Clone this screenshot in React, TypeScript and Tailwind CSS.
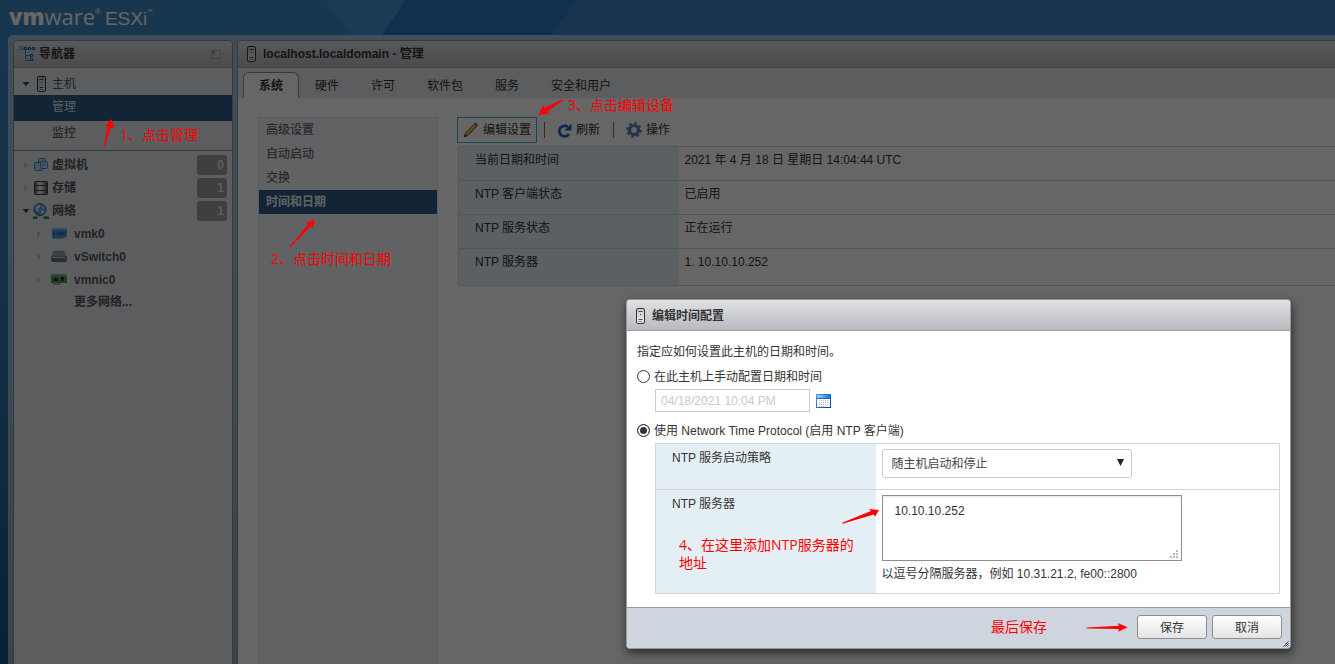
import { useState } from "react";
import type { ReactNode } from "react";

function HostIcon() {
  return (
    <svg className="h-4 w-[11px] shrink-0" viewBox="0 0 11 16" fill="none" aria-hidden="true">
      <defs>
        <linearGradient id="hostFill" x1="0" y1="0" x2="0" y2="1">
          <stop offset="0" stopColor="#c4c6c9" />
          <stop offset="1" stopColor="#eeeff1" />
        </linearGradient>
      </defs>
      <rect x="1.5" y="0.5" width="8" height="15" rx="1.5" fill="url(#hostFill)" stroke="#333333" />
      <path d="M3.500 3.500h4M3.500 11.500h4" stroke="#4a4a4a" />
      <path d="M3.500 13.500h4" stroke="#8a8a8a" />
      <rect x="5" y="6" width="1" height="1" fill="#333333" />
    </svg>
  );
}

function TreeIcon() {
  return (
    <svg className="h-4 w-4 shrink-0" viewBox="0 0 16 16" fill="none" aria-hidden="true">
      <path d="M3 2.500h12M6.500 3v11.500H11M6.500 9.500H11" stroke="#5d7f9c" />
      <rect x="0.5" y="0.5" width="3" height="3" fill="#b9e6fa" stroke="#4aa9d6" />
      <rect x="5.5" y="1.5" width="2" height="2" fill="#a5d4f5" stroke="#1d6fb5" />
      <rect x="9.5" y="1.5" width="2" height="2" fill="#a5d4f5" stroke="#1d6fb5" />
      <rect x="13.5" y="1.5" width="2" height="2" fill="#a5d4f5" stroke="#1d6fb5" />
      <rect x="11.5" y="8.5" width="2" height="2" fill="#a5d4f5" stroke="#1d6fb5" />
      <rect x="11.5" y="12.5" width="2" height="2" fill="#a5d4f5" stroke="#1d6fb5" />
    </svg>
  );
}

function VmIcon() {
  return (
    <svg className="h-[14px] w-4 shrink-0" viewBox="0 0 16 14" aria-hidden="true">
      <g fill="#b9d2ec" stroke="#3f8ad4" strokeWidth="1">
        <rect x="5.5" y="0.5" width="7" height="7" rx="1" />
        <rect x="1.5" y="4.500" width="8" height="8" rx="1" />
        <rect x="7.5" y="3.500" width="7" height="7" rx="1" fillOpacity="0.6" />
      </g>
    </svg>
  );
}

function StorageIcon() {
  return (
    <svg className="h-[14px] w-4 shrink-0" viewBox="0 0 16 14" aria-hidden="true">
      <defs>
        <linearGradient id="diskFill" x1="0" y1="0" x2="1" y2="0">
          <stop offset="0" stopColor="#6b6b6b" />
          <stop offset="0.4" stopColor="#ffffff" />
          <stop offset="1" stopColor="#5a5a5a" />
        </linearGradient>
      </defs>
      <rect x="1" y="0" width="14" height="14" rx="2" fill="#3c3c3c" />
      <path d="M2 1h12v3H2zM2 5h12v4H2zM2 10h12v3H2z" fill="url(#diskFill)" />
    </svg>
  );
}

function GlobeIcon() {
  return (
    <svg className="h-4 w-4 shrink-0" viewBox="0 0 16 16" aria-hidden="true">
      <path d="M0 13.500h16v2.500H0z" fill="#1f9a1f" />
      <path d="M5.500 12h4l1.500 4H4z" fill="#e8e8e8" />
      <circle cx="7" cy="6.5" r="6" fill="#5f98e2" stroke="#2b5fb0" />
      <path d="M3 3.500l3-2 2 1-1 2-2 1 1 2-1 1.500L2.500 7zM9 3l2 .5 1 2-2 .5zM8 7.500l3 0 0 2-2.500 2z" fill="#d5e6fb" />
    </svg>
  );
}

function VmkIcon() {
  return (
    <svg className="h-[11px] w-4 shrink-0" viewBox="0 0 16 11" aria-hidden="true">
      <path d="M1 0h15v9h-2v1H1z" fill="#4a97d8" />
      <path d="M1 0h15v2H1z" fill="#7dbdf0" />
      <path d="M3 4v3M5 5.500h3M9 4v3M11 4v3M13 4v3" stroke="#1b4f80" />
      <path d="M2 10h10v1H2z" fill="#b8b070" />
    </svg>
  );
}

function SwitchIcon() {
  return (
    <svg className="h-[11px] w-4 shrink-0" viewBox="0 0 16 11" aria-hidden="true">
      <path d="M3 0h10l3 6v3l-1 2H1L0 9V6z" fill="#6c7783" />
      <path d="M3 0.500h10l2.500 5H0.500z" fill="#98a3b0" />
      <path d="M1 6.500h14" stroke="#c0c8d0" />
    </svg>
  );
}

function NicIcon() {
  return (
    <svg className="h-[11px] w-4 shrink-0" viewBox="0 0 16 11" aria-hidden="true">
      <path d="M0 0h16v9H0z" fill="#4c9c58" />
      <path d="M0 0h16v2H0z" fill="#7cbf85" />
      <path d="M3 4h4v3H3zM10 3h3v4h-3z" fill="#243326" />
      <path d="M2 9h8v2H2z" fill="#b8b070" />
    </svg>
  );
}

function PencilIcon() {
  return (
    <svg className="h-4 w-4 shrink-0" viewBox="0 0 16 16" aria-hidden="true">
      <path d="M1.500 14.500l1-3.500L11.500 2l2.500 2-9 9.500z" fill="#e2a92c" stroke="#5f4a1c" strokeWidth="0.800" />
      <path d="M3.500 11.500L12 3" stroke="#ffe28a" />
      <path d="M11.500 2l1-1.200 2.300 2L14 4z" fill="#e59a9a" stroke="#5c3a3a" strokeWidth="0.600" />
      <path d="M1 15l.8-2.500 1.700 1.700z" fill="#111111" />
    </svg>
  );
}

function RefreshIcon() {
  return (
    <svg className="h-[15px] w-[15px] shrink-0" viewBox="0 0 15 15" aria-hidden="true">
      <path d="M12 11A5.300 5.300 0 1 1 11 4" fill="none" stroke="#1a66bd" strokeWidth="2.800" />
      <path d="M14.500 0.500v7h-7z" fill="#1a66bd" />
    </svg>
  );
}

function GearIcon() {
  return (
    <svg className="h-4 w-4 shrink-0" viewBox="0 0 16 16" aria-hidden="true">
      <g fill="none" stroke="#5580b8">
        <circle cx="8" cy="8" r="4.500" strokeWidth="3.200" />
        <circle cx="8" cy="8" r="6.800" strokeWidth="2" strokeDasharray="2.670 2.670" />
      </g>
    </svg>
  );
}

function CalendarIcon() {
  return (
    <svg className="h-[14px] w-[15px]" viewBox="0 0 15 14" aria-hidden="true">
      <defs>
        <linearGradient id="calTop" x1="0" y1="0" x2="1" y2="0">
          <stop offset="0" stopColor="#a4d3ff" />
          <stop offset="1" stopColor="#1271dd" />
        </linearGradient>
        <linearGradient id="calEdge" x1="0" y1="0" x2="1" y2="1">
          <stop offset="0" stopColor="#3f9bf5" />
          <stop offset="1" stopColor="#0a3f94" />
        </linearGradient>
      </defs>
      <rect x="0.5" y="0.5" width="14" height="13" fill="#ffffff" stroke="url(#calEdge)" />
      <rect x="1" y="1" width="13" height="3" fill="url(#calTop)" />
      <path d="M1 4.500h13" stroke="#1463c4" />
      <path d="M3 6.500h10M3 8.500h10M3 10.500h10M3 12.500h8" stroke="#b9bdc2" strokeDasharray="1 1" />
    </svg>
  );
}

function Caret({ open }: { open?: boolean }) {
  return (
    <svg className="h-2 w-2 shrink-0" viewBox="0 0 8 8" aria-hidden="true">
      {open ? <path d="M0.500 2h7L4 6z" fill="#44474a" /> : <path d="M2 0.500v7L6 4z" fill="#c2c5c9" />}
    </svg>
  );
}

function Panel({ header, children, className }: { header: ReactNode; children: ReactNode; className: string }) {
  return (
    <section className={`flex min-h-0 flex-col overflow-hidden border-t border-l border-[#8c8e90] ${className}`}>
      <header className="flex h-[27px] shrink-0 items-center border-b border-[#9b9da0] bg-linear-to-b from-[#dcdee1] to-[#bbbcc0] font-bold text-[#333]">
        {header}
      </header>
      {children}
    </section>
  );
}

function Badge({ count }: { count: number }) {
  return (
    <span className="mr-[5px] ml-auto flex h-5 w-[30px] items-center justify-end rounded-[3px] bg-[#9b9da0] pr-[3px] text-[#e6e8ed]">
      {count}
    </span>
  );
}

const inventory = [
  { label: "虚拟机", icon: <VmIcon />, count: 0, open: false },
  { label: "存储", icon: <StorageIcon />, count: 1, open: false },
  { label: "网络", icon: <GlobeIcon />, count: 1, open: true },
];

const networks = [
  { label: "vmk0", icon: <VmkIcon /> },
  { label: "vSwitch0", icon: <SwitchIcon /> },
  { label: "vmnic0", icon: <NicIcon /> },
];

function Navigator() {
  return (
    <Panel
      className="w-[220px] shrink-0 rounded-t-[5px] border-r bg-[#e6e8ed]"
      header={
        <div className="flex flex-1 items-center gap-1 pr-[11px] pl-[5px]">
          <TreeIcon />
          <h2>导航器</h2>
          <button type="button" aria-label="折叠" className="ml-auto">
            <svg className="h-[9px] w-[10px]" viewBox="0 0 10 9" fill="none" aria-hidden="true">
              <rect x="0.5" y="0.5" width="9" height="8" stroke="#a6a8ab" />
              <rect x="1" y="1" width="3" height="3" fill="#a6a8ab" />
            </svg>
          </button>
        </div>
      }
    >
      <nav className="text-[#55585c]">
        <div className="border-b border-[#8c8e90] pb-[5px]">
          <a href="#host" className="flex h-[27px] items-center pt-[5px] pl-2">
            <Caret open />
            <span className="mr-[5px] ml-[6px]">
              <HostIcon />
            </span>
            主机
          </a>
          <a href="#manage" className="flex h-[26px] items-center bg-[#2d5a85] pb-[2px] pl-[38px] text-[#e6e8ed]">
            管理
          </a>
          <a href="#monitor" className="flex h-6 items-center pl-[38px] text-[#44474a]">
            监控
          </a>
        </div>
        <div className="pt-[2px] font-bold">
          {inventory.map((item) => (
            <a key={item.label} href="#inventory" className="flex h-[23px] items-center pl-2">
              <Caret open={item.open} />
              <span className="mr-[3px] ml-[3px]">{item.icon}</span>
              {item.label}
              <Badge count={item.count} />
            </a>
          ))}
          {networks.map((item) => (
            <a key={item.label} href="#network" className="flex h-[23px] items-center pl-[21px]">
              <Caret />
              <span className="mr-[7px] ml-2">{item.icon}</span>
              {item.label}
            </a>
          ))}
          <a href="#more" className="flex h-[22px] items-center pl-[60px]">
            更多网络...
          </a>
        </div>
      </nav>
    </Panel>
  );
}

const tabs = ["系统", "硬件", "许可", "软件包", "服务", "安全和用户"];
const sections = ["高级设置", "自动启动", "交换", "时间和日期"];
const settings = [
  ["当前日期和时间", "2021 年 4 月 18 日 星期日 14:04:44 UTC"],
  ["NTP 客户端状态", "已启用"],
  ["NTP 服务状态", "正在运行"],
  ["NTP 服务器", "1. 10.10.10.252"],
];

function Manage() {
  return (
    <Panel
      className="flex-1 rounded-tl-[5px] bg-white"
      header={
        <div className="flex items-center gap-[6px] pl-2">
          <HostIcon />
          <h1>localhost.localdomain - 管理</h1>
        </div>
      }
    >
      <div role="tablist" className="flex h-[30px] shrink-0 items-end bg-[#e6e8ed] pl-[5px] text-[#333]">
        {tabs.map((tab, i) => (
          <button
            key={tab}
            type="button"
            role="tab"
            aria-selected={i === 0}
            className={
              i === 0
                ? "h-[26px] rounded-t-[6px] border border-b-0 border-[#8c8e90] bg-white px-[15px] pt-px font-bold"
                : "h-[26px] px-4 pt-[2px]"
            }
          >
            {tab}
          </button>
        ))}
      </div>
      <div className="flex min-h-0 flex-1 gap-[19px] pt-[19px] pl-5">
        <nav className="w-[180px] shrink-0 border border-b-0 border-[#e1e5ee] bg-[#f2f4f8] text-[#66696d]">
          {sections.map((s, i) => (
            <a
              key={s}
              href="#section"
              className={
                i === 3
                  ? "flex h-6 items-center bg-[#2d5a85] px-[7px] font-bold text-[#f2f4f8]"
                  : "flex h-6 items-center px-[7px] font-medium"
              }
            >
              {s}
            </a>
          ))}
        </nav>
        <div className="min-w-0 flex-1 text-[#333]">
          <div className="flex h-[26px] items-center">
            <button type="button" className="flex h-[26px] items-center gap-1 border border-[#32b4d2] px-[5px]">
              <PencilIcon />
              编辑设置
            </button>
            <span className="mx-[7px] h-4 w-px bg-[#777]" />
            <button type="button" className="flex items-center gap-1 px-[5px]">
              <RefreshIcon />
              刷新
            </button>
            <span className="mr-[7px] ml-2 h-4 w-px bg-[#777]" />
            <button type="button" className="flex items-center gap-1 px-[5px]">
              <GearIcon />
              操作
            </button>
          </div>
          <table className="mt-[3px] ml-px w-full table-fixed border-collapse border border-[#cdd2d4] leading-4">
            <tbody>
              {settings.map(([label, value]) => (
                <tr key={label} className="h-[34px] border-b border-[#cdd2d4] last:h-[37px]">
                  <th scope="row" className="w-[220px] bg-[#e4eff5] pt-[5px] pl-4 text-left align-top font-normal">
                    {label}
                  </th>
                  <td className="pt-[5px] pl-[6px] align-top">{value}</td>
                </tr>
              ))}
            </tbody>
          </table>
        </div>
      </div>
    </Panel>
  );
}

const radioClass =
  "mt-px h-[13px] w-[13px] shrink-0 appearance-none rounded-full border border-[#333] bg-white checked:bg-[#333] checked:shadow-[inset_0_0_0_2px_#fff]";

function TimeDialog() {
  const [mode, setMode] = useState("ntp");
  const [servers, setServers] = useState("10.10.10.252");
  return (
    <form
      role="dialog"
      aria-labelledby="dialog-title"
      className="absolute top-[299px] left-[626px] w-[665px] rounded-[4px] border border-[#999] bg-white text-[#333] shadow-[1px_4px_10px_rgba(0,0,0,0.6)]"
      onSubmit={(e) => e.preventDefault()}
    >
      <header className="flex h-[31px] items-center gap-[6px] rounded-t-[3px] border-b border-[#999] bg-linear-to-b from-[#e0e1e4] to-[#b9babf] pt-px pl-2">
        <HostIcon />
        <h2 id="dialog-title" className="font-bold">
          编辑时间配置
        </h2>
      </header>
      <div className="px-[10px] pt-3 pb-[13px]">
        <p className="leading-[18px]">指定应如何设置此主机的日期和时间。</p>
        <label className="mt-2 flex h-4 items-start gap-1">
          <input
            type="radio"
            name="mode"
            className={radioClass}
            checked={mode === "manual"}
            onChange={() => setMode("manual")}
          />
          在此主机上手动配置日期和时间
        </label>
        <div className="mt-1 flex items-center gap-[6px] pl-[18px]">
          <input
            type="text"
            aria-label="日期和时间"
            className="h-[23px] w-[155px] border border-[#ccc] px-[5px] text-[#c9c9c9]"
            defaultValue="04/18/2021 10:04 PM"
            disabled={mode === "ntp"}
          />
          <button type="button" aria-label="选择日期">
            <CalendarIcon />
          </button>
        </div>
        <label className="mt-[11px] flex h-4 items-start gap-1">
          <input
            type="radio"
            name="mode"
            className={radioClass}
            checked={mode === "ntp"}
            onChange={() => setMode("ntp")}
          />
          使用 Network Time Protocol (启用 NTP 客户端)
        </label>
        <div className="mt-1 pl-[18px]">
          <table className="w-full table-fixed border-collapse border border-[#d5d5d5] leading-4">
            <tbody>
              <tr className="h-[46px] border-b border-[#d5d5d5]">
                <th scope="row" className="w-[220px] bg-[#e4eff5] pt-[6px] pl-4 text-left align-top font-normal">
                  <label htmlFor="policy">NTP 服务启动策略</label>
                </th>
                <td className="pt-[5px] pl-[6px] align-top">
                  <div className="relative w-[250px]">
                    <select
                      id="policy"
                      className="h-[29px] w-full appearance-none rounded-[3px] border border-[#ccc] bg-white px-[9px] text-[#454545]"
                    >
                      <option>随主机启动和停止</option>
                      <option>手动启动和停止</option>
                    </select>
                    <svg
                      className="pointer-events-none absolute top-[10px] right-2 h-[7px] w-[7px]"
                      viewBox="0 0 7 7"
                      aria-hidden="true"
                    >
                      <path d="M0 0h7L3.500 7z" fill="#222" />
                    </svg>
                  </div>
                </td>
              </tr>
              <tr className="h-[104px]">
                <th scope="row" className="bg-[#e4eff5] pt-[6px] pl-4 text-left align-top font-normal">
                  <label htmlFor="servers">NTP 服务器</label>
                </th>
                <td className="pt-[5px] pl-[6px] align-top">
                  <div className="relative w-[300px]">
                    <textarea
                      id="servers"
                      className="block h-[66px] w-full resize-none border border-[#8e8e8e] px-3 py-[7px] shadow-[inset_0_1px_2px_rgba(0,0,0,0.1)]"
                      value={servers}
                      onChange={(e) => setServers(e.target.value)}
                    />
                    <svg
                      className="pointer-events-none absolute right-1 bottom-[3px] h-2 w-2"
                      viewBox="0 0 8 8"
                      fill="#bbb"
                      aria-hidden="true"
                    >
                      <path d="M6 0h2v2H6zM3 3h2v2H3zM6 3h2v2H6zM0 6h2v2H0zM3 6h2v2H3zM6 6h2v2H6z" />
                    </svg>
                  </div>
                  <p className="mt-[5px]">以逗号分隔服务器，例如 10.31.21.2, fe00::2800</p>
                </td>
              </tr>
            </tbody>
          </table>
        </div>
      </div>
      <footer className="relative flex h-[41px] items-start justify-end gap-[5px] rounded-b-[3px] border-t border-[#999] bg-[#cfd5de] pt-[7px] pr-2">
        <button
          type="submit"
          className="h-6 w-[70px] rounded-[3px] border border-[#8e8e8e] bg-linear-to-b from-white to-[#e4e4e4] pt-px"
        >
          保存
        </button>
        <button
          type="button"
          className="h-6 w-[70px] rounded-[3px] border border-[#8e8e8e] bg-linear-to-b from-white to-[#e4e4e4] pt-px"
        >
          取消
        </button>
        <svg className="absolute right-px bottom-px h-[6px] w-[6px]" viewBox="0 0 6 6" aria-hidden="true">
          <path d="M0.500 5.500l5-5M2.500 5.500l3-3M4.500 5.500l1-1" stroke="#333" />
        </svg>
      </footer>
    </form>
  );
}

function Notes() {
  return (
    <div className="pointer-events-none absolute inset-0 font-['Open_Sans','Noto_Sans_CJK_SC',sans-serif] text-[14px] leading-[18px] text-[#ff0000]">
      <svg className="absolute top-[116px] left-[100px] h-9 w-5" viewBox="100 116 20 36" fill="#ff0000" aria-hidden="true">
        <path d="M111.700 119l2.300 9.500-3.200-.8L104.300 148h-.8l4-21-2.300-1.300z" />
      </svg>
      <p className="absolute top-[126px] left-[120px]">1、点击管理</p>
      <svg className="absolute top-[216px] left-[286px] h-9 w-9" viewBox="286 216 36 36" fill="#ff0000" aria-hidden="true">
        <path d="M314.700 219.300l-1.500 8.700-2.200-2L290 247.700l-.8-.8L308 224.500l-2.200-1.500z" />
      </svg>
      <p className="absolute top-[250px] left-[271px]">2、点击时间和日期</p>
      <svg className="absolute top-[96px] left-[536px] h-5 w-7" viewBox="536 96 28 20" fill="#ff0000" aria-hidden="true">
        <path d="M538.200 115l5-9.500 1.800 2.300L562.500 99.300l.5.900L547.500 111.500l1.300 2.200z" />
      </svg>
      <p className="absolute top-[96px] left-[568px]">3、点击编辑设备</p>
      <svg className="absolute top-[506px] left-[840px] h-5 w-10" viewBox="840 506 40 20" fill="#ff0000" aria-hidden="true">
        <path d="M879 510l-4 6.700-1.200-2.200L842.500 523.700l-.3-.9L871 511l-2-2z" />
      </svg>
      <p className="absolute top-[536px] left-[679px] w-[186px]">4、在这里添加NTP服务器的地址</p>
      <p className="absolute top-[618px] left-[991px]">最后保存</p>
      <svg className="absolute top-[620px] left-[1084px] h-4 w-11" viewBox="1084 620 44 16" fill="#ff0000" aria-hidden="true">
        <path d="M1127.700 627.300l-9.400 4.400.7-2.700L1086.500 628.400v-.9L1119 625.700l-1.300-2.700z" />
      </svg>
    </div>
  );
}

export default function App() {
  return (
    <div className="relative flex h-screen flex-col overflow-hidden bg-linear-to-b from-[#3c87c8] via-[#2f76ad] to-[#1e527f] font-['Liberation_Sans','Noto_Sans_CJK_SC',sans-serif] text-[12px] leading-4">
      <div className="relative h-[35px] shrink-0">
        <svg className="absolute inset-0 h-full w-full" viewBox="0 0 1335 35" preserveAspectRatio="none" aria-hidden="true">
          <path d="M0 0h1335v35H0z" fill="#3c87c4" />
          <path d="M325 0h81l-24 35h-31z" fill="#4691cf" />
          <path d="M406 0h170l-24 35H382z" fill="#2b78c1" />
          <path d="M576 0h759v35H552z" fill="#3c82c3" />
        </svg>
        <div className="relative flex items-baseline pl-[9px] font-['Open_Sans',sans-serif] text-[22px] leading-8 text-white">
          <span className="font-extrabold">vm</span>
          <span>ware</span>
          <span className="mr-1 self-start text-[7px] leading-6">®</span>
          <span className="font-['Liberation_Sans',sans-serif] text-[19px]">ESXi</span>
          <span className="self-start text-[7px] leading-6">™</span>
        </div>
      </div>
      <div className="ml-2 flex min-h-0 flex-1 gap-1 rounded-tl-[5px] bg-white/50 pt-[5px] pl-[5px]">
        <Navigator />
        <Manage />
      </div>
      <div className="absolute inset-0 bg-black/60" />
      <TimeDialog />
      <Notes />
    </div>
  );
}
